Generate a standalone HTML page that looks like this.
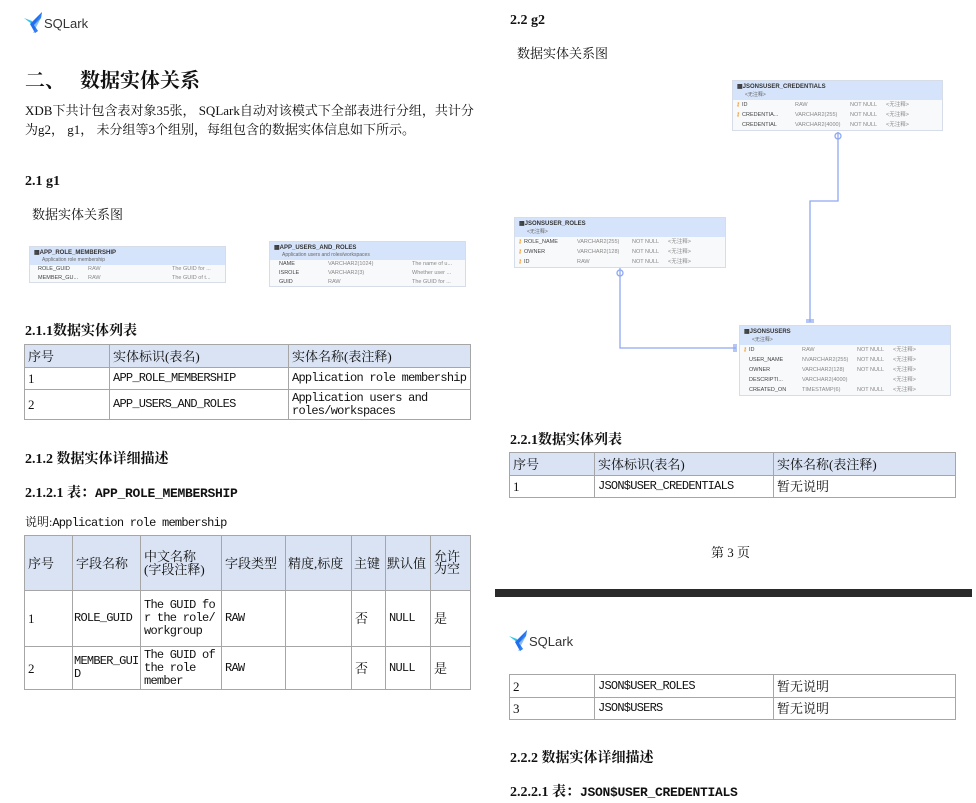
<!DOCTYPE html>
<html><head><meta charset="utf-8"><style>
*{margin:0;padding:0;box-sizing:border-box}
body{width:976px;height:803px;background:#fff;position:relative;overflow:hidden;font-family:"Liberation Serif","Noto Serif CJK SC",serif;color:#111}
.a{position:absolute;white-space:nowrap}
.b{font-weight:bold}
.m{font-family:"Liberation Mono","Noto Serif CJK SC",monospace;letter-spacing:-0.75px;font-size:12px}
.hm{font-family:"Liberation Mono",monospace;letter-spacing:-0.3px;font-size:13px}
table{position:absolute;border-collapse:collapse;font-size:13px;table-layout:fixed}
td{border:1px solid #a6a6a6;padding:0 3px;vertical-align:middle;line-height:13px;overflow:hidden}
tr.h td{background:#dae3f3}
.logo{position:absolute;display:flex;align-items:center}
.logo span{font-family:"Liberation Sans",sans-serif;font-size:13px;color:#333;margin-left:1px}
.er{position:absolute;border:1px solid #d6dde8;background:#f8f9fb;font-family:"Liberation Sans",sans-serif;font-size:5.5px;color:#888}
.er .hd{background:#d6e4fb;color:#333;font-weight:bold;padding:2px 4px;font-size:6px}
.er .hd i{display:block;font-style:normal;font-weight:normal;color:#666;font-size:5px;padding-left:8px;margin-top:1px}
.er .r{position:relative;height:10px;line-height:10px}
.er .r b{position:absolute;font-weight:normal}
.er .r b.n{color:#444}
.k{color:#f08a00}
</style></head><body>

<div class="logo" style="left:24px;top:12px">
<svg width="19" height="22" viewBox="0 0 19 22"><polygon points="0,6 8,9 9,13" fill="#36c5e8"/><polygon points="18,0 6,12 11,21 14,19 10,13 17,6" fill="#1f6ef0"/><polygon points="18,0 10,13 14,19 9,21 17,6" fill="#3d8cf5" opacity=".6"/></svg>
<span>SQLark</span></div>

<div class="a b" style="left:25px;top:64px;font-size:20px">二、&nbsp;&nbsp;&nbsp;数据实体关系</div>
<div class="a" style="left:25px;top:101px;font-size:13px;line-height:19px">XDB下共计包含表对象35张，&nbsp;SQLark自动对该模式下全部表进行分组，共计分<br>为g2，&nbsp;g1，&nbsp;未分组等3个组别，每组包含的数据实体信息如下所示。</div>
<div class="a b" style="left:25px;top:174px;font-size:14px">2.1 g1</div>
<div class="a" style="left:32px;top:204px;font-size:13px">数据实体关系图</div>

<div class="er" style="left:29px;top:246px;width:197px;height:37px">
<div class="hd">▦APP_ROLE_MEMBERSHIP<i>Application role membership</i></div>
<div class="r" style="height:9px;line-height:9px"><b class="n" style="left:8px">ROLE_GUID</b><b style="left:58px">RAW</b><b style="left:142px">The GUID for ...</b></div>
<div class="r" style="height:9px;line-height:9px"><b class="n" style="left:8px">MEMBER_GU...</b><b style="left:58px">RAW</b><b style="left:142px">The GUID of t...</b></div>
</div>
<div class="er" style="left:269px;top:241px;width:197px;height:46px">
<div class="hd">▦APP_USERS_AND_ROLES<i>Application users and roles/workspaces</i></div>
<div class="r" style="height:9px;line-height:9px"><b class="n" style="left:9px">NAME</b><b style="left:58px">VARCHAR2(1024)</b><b style="left:142px">The name of u...</b></div>
<div class="r" style="height:9px;line-height:9px"><b class="n" style="left:9px">ISROLE</b><b style="left:58px">VARCHAR2(3)</b><b style="left:142px">Whether user ...</b></div>
<div class="r" style="height:9px;line-height:9px"><b class="n" style="left:9px">GUID</b><b style="left:58px">RAW</b><b style="left:142px">The GUID for ...</b></div>
</div>

<div class="a b" style="left:25px;top:320px;font-size:14px">2.1.1数据实体列表</div>
<table style="left:24px;top:344px;width:447px">
<col style="width:85px"><col style="width:179px"><col>
<tr class="h" style="height:23px"><td>序号</td><td>实体标识(表名)</td><td>实体名称(表注释)</td></tr>
<tr style="height:22px"><td>1</td><td class="m">APP_ROLE_MEMBERSHIP</td><td class="m" style="white-space:nowrap">Application role membership</td></tr>
<tr style="height:30px"><td>2</td><td class="m">APP_USERS_AND_ROLES</td><td class="m" style="white-space:normal">Application users and roles/workspaces</td></tr>
</table>

<div class="a b" style="left:25px;top:448px;font-size:14px">2.1.2 数据实体详细描述</div>
<div class="a b" style="left:25px;top:482px;font-size:14px">2.1.2.1 表：<span class="hm">APP_ROLE_MEMBERSHIP</span></div>
<div class="a" style="left:25px;top:513px;font-size:12px">说明:<span class="m">Application role membership</span></div>

<table style="left:24px;top:535px;width:447px">
<col style="width:48px"><col style="width:68px"><col style="width:81px"><col style="width:64px"><col style="width:66px"><col style="width:34px"><col style="width:45px"><col>
<tr class="h" style="height:55px"><td>序号</td><td>字段名称</td><td style="line-height:13px">中文名称<br>(字段注释)</td><td>字段类型</td><td style="padding:0 2px;white-space:nowrap">精度,标度</td><td style="padding:0 2px">主键</td><td style="padding:0 1px;white-space:nowrap">默认值</td><td style="line-height:12px">允许<br>为空</td></tr>
<tr style="height:56px"><td>1</td><td class="m" style="padding:0 1px">ROLE_GUID</td><td class="m" style="white-space:normal;word-break:break-all">The GUID for the role/workgroup</td><td class="m">RAW</td><td></td><td>否</td><td class="m">NULL</td><td>是</td></tr>
<tr style="height:43px"><td>2</td><td class="m" style="white-space:normal;word-break:break-all;padding:0 1px">MEMBER_GUID</td><td class="m" style="white-space:normal">The GUID of the role member</td><td class="m">RAW</td><td></td><td>否</td><td class="m">NULL</td><td>是</td></tr>
</table>

<!-- right column -->
<div class="a b" style="left:510px;top:13px;font-size:14px">2.2 g2</div>
<div class="a" style="left:517px;top:43px;font-size:13px">数据实体关系图</div>

<svg class="a" style="left:0;top:0" width="976" height="420">
<g stroke="#8fa8f0" stroke-width="1.3" fill="none">
<polyline points="838,132 838,201 810,201 810,322"/>
<polyline points="620,268 620,348 736,348"/>
<circle cx="838" cy="136" r="3"/><circle cx="620" cy="273" r="3"/>
<line x1="806" y1="320" x2="814" y2="320"/><line x1="806" y1="322" x2="814" y2="322"/>
<line x1="734" y1="344" x2="734" y2="352"/><line x1="736" y1="344" x2="736" y2="352"/>
</g></svg>

<div class="er" style="left:732px;top:80px;width:211px;height:51px">
<div class="hd" style="height:19px">▦JSONSUSER_CREDENTIALS<i>&lt;无注释&gt;</i></div>
<div class="r"><b class="k" style="left:3px">⚷</b><b class="n" style="left:9px">ID</b><b style="left:62px">RAW</b><b style="left:117px">NOT NULL</b><b style="left:153px">&lt;无注释&gt;</b></div>
<div class="r"><b class="k" style="left:3px">⚷</b><b class="n" style="left:9px">CREDENTIA...</b><b style="left:62px">VARCHAR2(255)</b><b style="left:117px">NOT NULL</b><b style="left:153px">&lt;无注释&gt;</b></div>
<div class="r"><b class="n" style="left:9px">CREDENTIAL</b><b style="left:62px">VARCHAR2(4000)</b><b style="left:117px">NOT NULL</b><b style="left:153px">&lt;无注释&gt;</b></div>
</div>
<div class="er" style="left:514px;top:217px;width:212px;height:51px">
<div class="hd" style="height:19px">▦JSONSUSER_ROLES<i>&lt;无注释&gt;</i></div>
<div class="r"><b class="k" style="left:3px">⚷</b><b class="n" style="left:9px">ROLE_NAME</b><b style="left:62px">VARCHAR2(255)</b><b style="left:117px">NOT NULL</b><b style="left:153px">&lt;无注释&gt;</b></div>
<div class="r"><b class="k" style="left:3px">⚷</b><b class="n" style="left:9px">OWNER</b><b style="left:62px">VARCHAR2(128)</b><b style="left:117px">NOT NULL</b><b style="left:153px">&lt;无注释&gt;</b></div>
<div class="r"><b class="k" style="left:3px">⚷</b><b class="n" style="left:9px">ID</b><b style="left:62px">RAW</b><b style="left:117px">NOT NULL</b><b style="left:153px">&lt;无注释&gt;</b></div>
</div>
<div class="er" style="left:739px;top:325px;width:212px;height:71px">
<div class="hd" style="height:19px">▦JSONSUSERS<i>&lt;无注释&gt;</i></div>
<div class="r"><b class="k" style="left:3px">⚷</b><b class="n" style="left:9px">ID</b><b style="left:62px">RAW</b><b style="left:117px">NOT NULL</b><b style="left:153px">&lt;无注释&gt;</b></div>
<div class="r"><b class="n" style="left:9px">USER_NAME</b><b style="left:62px">NVARCHAR2(255)</b><b style="left:117px">NOT NULL</b><b style="left:153px">&lt;无注释&gt;</b></div>
<div class="r"><b class="n" style="left:9px">OWNER</b><b style="left:62px">VARCHAR2(128)</b><b style="left:117px">NOT NULL</b><b style="left:153px">&lt;无注释&gt;</b></div>
<div class="r"><b class="n" style="left:9px">DESCRIPTI...</b><b style="left:62px">VARCHAR2(4000)</b><b style="left:153px">&lt;无注释&gt;</b></div>
<div class="r"><b class="n" style="left:9px">CREATED_ON</b><b style="left:62px">TIMESTAMP(6)</b><b style="left:117px">NOT NULL</b><b style="left:153px">&lt;无注释&gt;</b></div>
</div>

<div class="a b" style="left:510px;top:429px;font-size:14px">2.2.1数据实体列表</div>
<table style="left:509px;top:452px;width:447px">
<col style="width:85px"><col style="width:179px"><col>
<tr class="h" style="height:23px"><td>序号</td><td>实体标识(表名)</td><td>实体名称(表注释)</td></tr>
<tr style="height:22px"><td>1</td><td class="m">JSON$USER_CREDENTIALS</td><td>暂无说明</td></tr>
</table>

<div class="a" style="left:711px;top:542px;font-size:13px">第 3 页</div>
<div class="a" style="left:495px;top:589px;width:477px;height:8px;background:#2a2a2a"></div>

<div class="logo" style="left:509px;top:630px">
<svg width="19" height="22" viewBox="0 0 19 22"><polygon points="0,6 8,9 9,13" fill="#36c5e8"/><polygon points="18,0 6,12 11,21 14,19 10,13 17,6" fill="#1f6ef0"/><polygon points="18,0 10,13 14,19 9,21 17,6" fill="#3d8cf5" opacity=".6"/></svg>
<span>SQLark</span></div>

<table style="left:509px;top:674px;width:447px">
<col style="width:85px"><col style="width:179px"><col>
<tr style="height:23px"><td>2</td><td class="m">JSON$USER_ROLES</td><td>暂无说明</td></tr>
<tr style="height:22px"><td>3</td><td class="m">JSON$USERS</td><td>暂无说明</td></tr>
</table>

<div class="a b" style="left:510px;top:747px;font-size:14px">2.2.2 数据实体详细描述</div>
<div class="a b" style="left:510px;top:781px;font-size:14px">2.2.2.1 表：<span class="hm">JSON$USER_CREDENTIALS</span></div>
</body></html>
